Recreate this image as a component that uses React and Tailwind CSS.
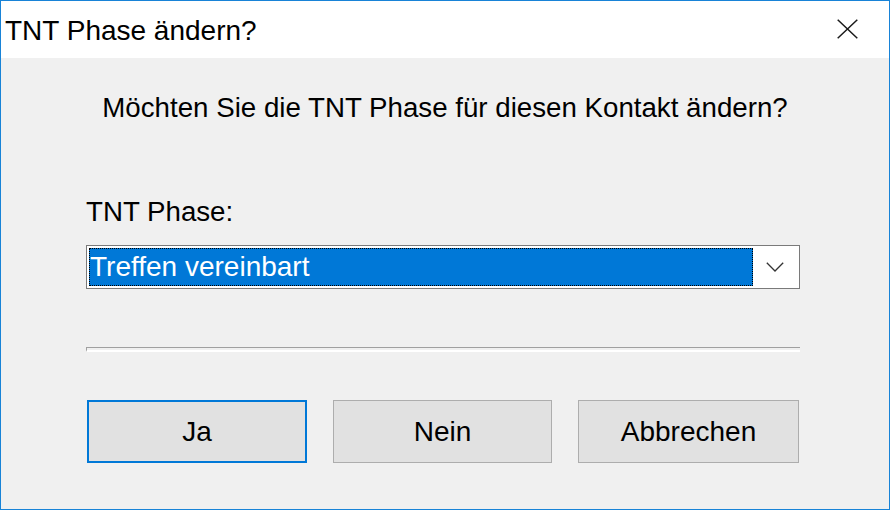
import React from 'react';

function CloseIcon() {
  return (
    <svg width="21" height="20" viewBox="0 0 21 20" className="block">
      <path d="M0.7 0.7 L20.3 19.3 M20.3 0.7 L0.7 19.3" stroke="#1a1a1a" strokeWidth="1.5" fill="none" />
    </svg>
  );
}

function Chevron() {
  return (
    <svg width="18" height="10" viewBox="0 0 18 10" className="block">
      <path d="M0.8 0.8 L9 9 L17.2 0.8" stroke="#333" strokeWidth="1.3" fill="none" />
    </svg>
  );
}

export default function App() {
  return (
    <div className="w-[891px] h-[511px] bg-white" style={{ fontFamily: '"Liberation Sans", Arial, sans-serif' }}>
      <div className="w-[890px] h-[510px] border border-[#1883d7] flex flex-col bg-[#f0f0f0]">
        <div className="h-[57px] shrink-0 bg-white flex items-start justify-between pl-[4px] pr-[31px]">
          <span className="mt-[14px] text-[28px] text-black leading-[32px]">TNT Phase ändern?</span>
          <div className="mt-[18px]">
            <CloseIcon />
          </div>
        </div>

        <div className="flex flex-col px-[85px]">
          <p className="text-[27.7px] text-black text-center mt-[34px] leading-[32px]">
            Möchten Sie die TNT Phase für diesen Kontakt ändern?
          </p>

          <label className="text-[27.7px] text-black mt-[72px] leading-[32px]">TNT Phase:</label>

          <div className="mt-[17px] w-[714px] h-[44px] border border-[#7a7a7a] bg-white flex items-center p-[2px]">
            <div className="flex-1 h-full bg-[#0078d7] outline-1 outline-dotted outline-black -outline-offset-1 flex items-center pl-[1px]">
              <span className="text-[28px] text-white leading-[32px]">Treffen vereinbart</span>
            </div>
            <div className="w-[44px] flex items-center justify-center">
              <Chevron />
            </div>
          </div>

          <div className="mt-[58px] w-[714px] h-[5px] border-t border-l border-[#a0a0a0] border-b-2 border-b-white" />

          <div className="mt-[48px] flex gap-[26px] pl-[1px]">
            <button className="w-[220px] h-[63px] bg-[#e1e1e1] border-2 border-[#0078d7] text-[28px] text-black leading-none">
              Ja
            </button>
            <button className="w-[219px] h-[63px] bg-[#e1e1e1] border border-[#adadad] text-[28px] text-black leading-none">
              Nein
            </button>
            <button className="w-[221px] h-[63px] bg-[#e1e1e1] border border-[#adadad] text-[28px] text-black leading-none">
              Abbrechen
            </button>
          </div>
        </div>
      </div>
    </div>
  );
}
